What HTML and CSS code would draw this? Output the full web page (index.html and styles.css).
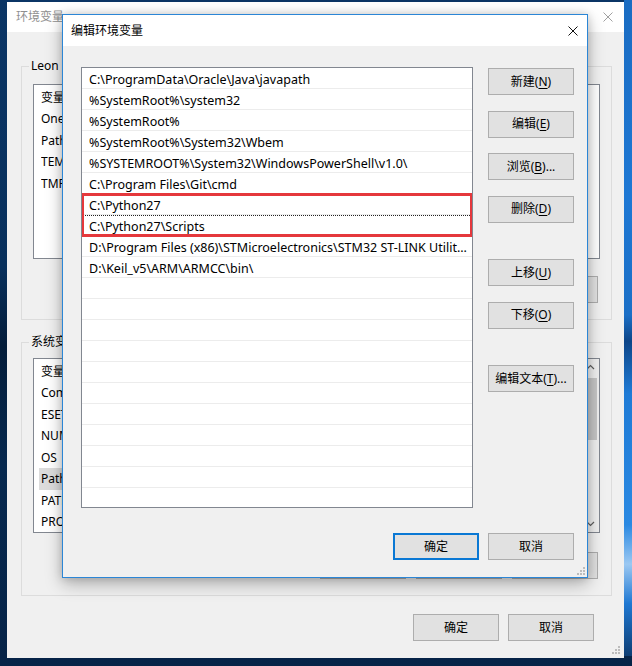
FILE: index.html
```html
<!DOCTYPE html>
<html lang="zh-CN">
<head>
<meta charset="utf-8">
<title>编辑环境变量</title>
<link rel="stylesheet" href="styles.css">
</head>
<body>
<div class="desktop">
  <div class="main-window">
    <div class="titlebar">
      <span class="title inactive">环境变量</span>
      <svg class="close" width="10" height="10" viewBox="0 0 10 10"><path d="M0.5 0.5L9.5 9.5M9.5 0.5L0.5 9.5" stroke="#a0a0a0" stroke-width="1"/></svg>
    </div>
    <div class="main-body">
      <fieldset class="group group-user">
        <legend>Leon 的用户变量(<u>U</u>)</legend>
        <div class="lv lv-user">
          <div class="lv-items">
            <div class="lv-head"><span class="c1">变量</span></div>
            <div class="lv-row"><span class="c1">OneDrive</span></div>
            <div class="lv-row"><span class="c1">Path</span></div>
            <div class="lv-row"><span class="c1">TEMP</span></div>
            <div class="lv-row"><span class="c1">TMP</span></div>
          </div>
        </div>
        <div class="btn-row">
          <div class="btn"></div>
          <div class="btn"></div>
          <div class="btn"></div>
        </div>
      </fieldset>
      <fieldset class="group group-sys">
        <legend>系统变量(<u>S</u>)</legend>
        <div class="lv lv-sys">
          <div class="lv-items">
            <div class="lv-head"><span class="c1">变量</span></div>
            <div class="lv-row"><span class="c1">ComSpec</span></div>
            <div class="lv-row"><span class="c1">ESET_OPTIONS</span></div>
            <div class="lv-row"><span class="c1">NUMBER_OF_PROCESSORS</span></div>
            <div class="lv-row"><span class="c1">OS</span></div>
            <div class="lv-row sel"><span class="c1">Path</span></div>
            <div class="lv-row"><span class="c1">PATHEXT</span></div>
            <div class="lv-row"><span class="c1">PROCESSOR_ARCHITECTURE</span></div>
          </div>
          <div class="vscroll">
            <svg class="arrow" width="17" height="17" viewBox="0 0 17 17"><path d="M5 10L8.5 6.5L12 10" fill="none" stroke="#606060" stroke-width="1.2"/></svg>
            <div class="track"><div class="thumb"></div></div>
            <svg class="arrow" width="17" height="17" viewBox="0 0 17 17"><path d="M5 7L8.5 10.5L12 7" fill="none" stroke="#606060" stroke-width="1.2"/></svg>
          </div>
        </div>
        <div class="btn-row">
          <div class="btn"></div>
          <div class="btn"></div>
          <div class="btn"></div>
        </div>
      </fieldset>
      <div class="footer main-footer">
        <div class="btn">确定</div>
        <div class="btn">取消</div>
      </div>
    </div>
    <svg class="grip" width="8" height="8" viewBox="0 0 8 8"><g fill="#bcbcbc"><rect x="6" y="0" width="2" height="2"/><rect x="3" y="3" width="2" height="2"/><rect x="6" y="3" width="2" height="2"/><rect x="0" y="6" width="2" height="2"/><rect x="3" y="6" width="2" height="2"/><rect x="6" y="6" width="2" height="2"/></g></svg>
  </div>

  <div class="dialog">
    <div class="titlebar dlg-titlebar">
      <span class="title">编辑环境变量</span>
      <svg class="close" width="10" height="10" viewBox="0 0 10 10"><path d="M0.5 0.5L9.5 9.5M9.5 0.5L0.5 9.5" stroke="#111" stroke-width="1"/></svg>
    </div>
    <div class="dlg-body">
      <div class="dlg-main">
        <div class="paths">
          <div class="path-row">C:\ProgramData\Oracle\Java\javapath</div>
          <div class="path-row">%SystemRoot%\system32</div>
          <div class="path-row">%SystemRoot%</div>
          <div class="path-row">%SystemRoot%\System32\Wbem</div>
          <div class="path-row">%SYSTEMROOT%\System32\WindowsPowerShell\v1.0\</div>
          <div class="path-row">C:\Program Files\Git\cmd</div>
          <div class="path-row">C:\Python27</div>
          <div class="path-row focus">C:\Python27\Scripts</div>
          <div class="path-row">D:\Program Files (x86)\STMicroelectronics\STM32 ST-LINK Utilit...</div>
          <div class="path-row">D:\Keil_v5\ARM\ARMCC\bin\</div>
          <div class="path-row"></div>
          <div class="path-row"></div>
          <div class="path-row"></div>
          <div class="path-row"></div>
          <div class="path-row"></div>
          <div class="path-row"></div>
          <div class="path-row"></div>
          <div class="path-row"></div>
          <div class="path-row"></div>
          <div class="path-row"></div>
          <div class="path-row"></div>
          <div class="mark"></div>
        </div>
        <div class="btn-col">
          <div class="btn">新建(<u>N</u>)</div>
          <div class="btn">编辑(<u>E</u>)</div>
          <div class="btn">浏览(<u>B</u>)...</div>
          <div class="btn">删除(<u>D</u>)</div>
          <div class="btn gap-big">上移(<u>U</u>)</div>
          <div class="btn">下移(<u>O</u>)</div>
          <div class="btn gap-big">编辑文本(<u>T</u>)...</div>
        </div>
      </div>
      <div class="footer dlg-footer">
        <div class="btn default">确定</div>
        <div class="btn">取消</div>
      </div>
    </div>
    <svg class="grip" width="8" height="8" viewBox="0 0 8 8"><g fill="#bcbcbc"><rect x="6" y="0" width="2" height="2"/><rect x="3" y="3" width="2" height="2"/><rect x="6" y="3" width="2" height="2"/><rect x="0" y="6" width="2" height="2"/><rect x="3" y="6" width="2" height="2"/><rect x="6" y="6" width="2" height="2"/></g></svg>
  </div>
</div>
</body>
</html>
```

FILE: styles.css
```css
* { box-sizing: border-box; }

html, body {
  margin: 0;
  padding: 0;
}

body {
  width: 632px;
  height: 666px;
  overflow: hidden;
  font-family: "Noto Sans", "Noto Sans CJK SC", sans-serif;
  font-size: 12px;
  color: #000;
  background: #0a2b52;
}

.desktop {
  position: relative;
  width: 632px;
  height: 666px;
  background: linear-gradient(to bottom, #0b3565 0%, #08305c 40%, #041d3a 52%, #07294f 70%, #062347 100%);
}

.desktop::after {
  content: "";
  position: absolute;
  left: 624px;
  top: 0;
  width: 8px;
  height: 656px;
  background: linear-gradient(to bottom, #1a6cc2 0%, #1e78d4 30%, #1b6fc6 48%, #0c4588 52%, #1f7bd6 60%, #2a89e2 80%, #9bc8f2 86%, #1f78d2 92%, #0d3d73 100%);
}

/* ---------- main window ---------- */
.main-window {
  position: absolute;
  left: 7px;
  top: 2px;
  width: 617px;
  height: 656px;
  background: #f0f0f0;
  display: flex;
  flex-direction: column;
}

.titlebar {
  display: flex;
  align-items: center;
  background: #fff;
  flex: none;
}

.main-window > .titlebar {
  height: 30px;
  padding: 0 11px 0 9px;
}

.title {
  font-size: 12px;
  line-height: 16px;
}

.title.inactive { color: #8f8f8f; }

.close { margin-left: auto; display: block; }

.main-body {
  padding: 0 12px 0 14px;
  display: flex;
  flex-direction: column;
}

.group {
  margin: 0;
  padding: 0 11px 16px 11px;
  border: 1px solid #dcdcdc;
  min-width: 0;
}

.group legend {
  padding: 0 2px;
  margin-left: -4px;
  font-size: 12px;
  line-height: 16px;
  white-space: nowrap;
}

.group-user { margin-top: 26px; }
.group-sys { margin-top: 14px; }

.lv {
  height: 175px;
  border: 1px solid #828790;
  background: #fff;
  display: flex;
  overflow: hidden;
}

.group-user .lv { margin-top: 10px; }
.group-sys .lv { margin-top: 8px; }

.lv-items {
  flex: 1;
  padding-left: 5px;
  min-width: 0;
}

.lv-head, .lv-row {
  display: flex;
  align-items: center;
  padding-left: 2px;
  white-space: nowrap;
}

.lv-head { height: 23px; }
.lv-row { height: 21.5px; }
.lv-row.sel { background: #dcdcdc; width: 200px; }

.c1 { width: 200px; flex: none; overflow: hidden; }

.vscroll {
  width: 17px;
  flex: none;
  display: flex;
  flex-direction: column;
  background: #f0f0f0;
}

.vscroll .arrow { display: block; flex: none; }

.track {
  flex: 1;
  padding: 2px 2px 0 2px;
}

.thumb {
  height: 62px;
  background: #c6c6c6;
}

.btn-row {
  display: flex;
  justify-content: flex-end;
  gap: 10px;
  margin-right: 2px;
}

.group-user .btn-row { margin-top: 17px; }
.group-sys .btn-row { margin-top: 19px; }

.btn {
  width: 86px;
  height: 27px;
  flex: none;
  display: flex;
  align-items: center;
  justify-content: center;
  background: #e1e1e1;
  border: 1px solid #adadad;
  font-size: 12px;
  line-height: 16px;
  white-space: nowrap;
}

.btn u { text-underline-offset: 2px; }

.footer {
  display: flex;
  justify-content: flex-end;
  gap: 9px;
}

.main-footer {
  margin-top: 18px;
  margin-right: 18px;
}

.grip {
  position: absolute;
  right: 4px;
  bottom: 4px;
  display: block;
}

/* ---------- edit dialog ---------- */
.dialog {
  position: absolute;
  left: 62px;
  top: 14px;
  width: 526px;
  height: 564px;
  border: 1px solid #2b86d6;
  background: #f0f0f0;
  box-shadow: 0 6px 16px rgba(0, 0, 0, 0.28), 0 0 8px rgba(0, 0, 0, 0.15);
  display: flex;
  flex-direction: column;
}

.dlg-titlebar {
  height: 31px;
  padding: 0 9px 0 8px;
}

.dlg-body {
  padding: 21px 13px 0 18px;
  display: flex;
  flex-direction: column;
}

.dlg-main {
  display: flex;
  gap: 15px;
}

.paths {
  position: relative;
  width: 392px;
  height: 441px;
  border: 1px solid #828790;
  background: #fff;
  overflow: hidden;
}

.path-row {
  height: 21px;
  line-height: 21px;
  padding-top: 1px;
  padding-left: 7px;
  padding-right: 2px;
  font-size: 12.5px;
  border-bottom: 1px solid #ececec;
  white-space: nowrap;
  overflow: hidden;
  text-overflow: ellipsis;
}

.path-row.focus {
  outline: 1px dotted #222;
  outline-offset: -1px;
}

.mark {
  position: absolute;
  left: -1px;
  top: 125px;
  width: 392px;
  height: 44px;
  border: 3px solid #e5383c;
}

.btn-col {
  display: flex;
  flex-direction: column;
  gap: 15.5px;
  padding-top: 1px;
}

.btn-col .gap-big { margin-top: 21px; }

.dlg-footer {
  margin-top: 25px;
}

.btn.default {
  border: 2px solid #0a78d4;
}

.dialog > .grip {
  right: 2px;
  bottom: 2px;
}
```
